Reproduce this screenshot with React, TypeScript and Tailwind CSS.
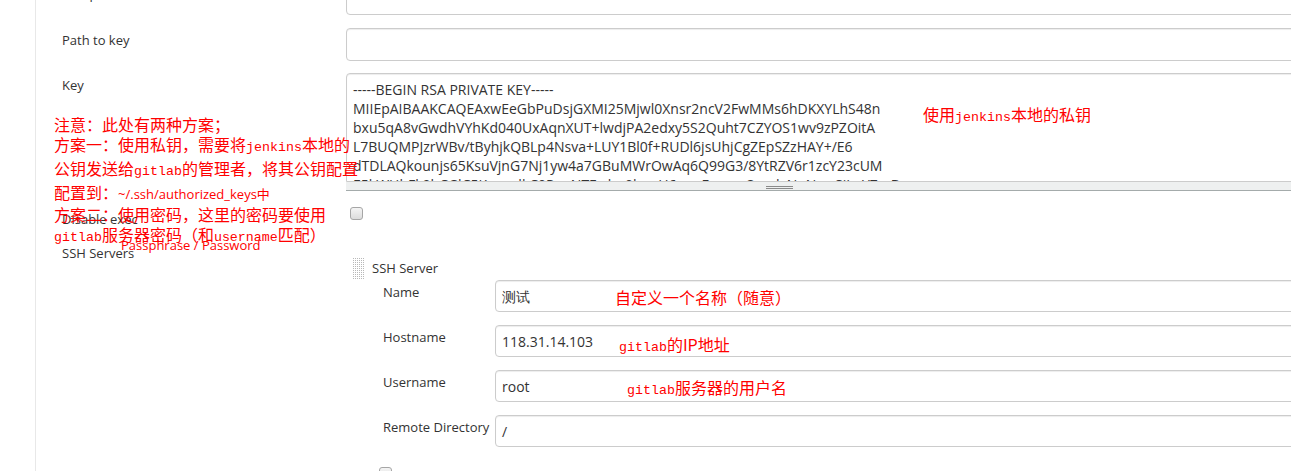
import React from 'react';

const mono = "font-['Liberation_Mono',monospace] text-[13.3px]";

const keyLines = [
  '-----BEGIN RSA PRIVATE KEY-----',
  'MIIEpAIBAAKCAQEAxwEeGbPuDsjGXMI25Mjwl0Xnsr2ncV2FwMMs6hDKXYLhS48n',
  'bxu5qA8vGwdhVYhKd040UxAqnXUT+lwdjPA2edxy5S2Quht7CZYOS1wv9zPZOitA',
  'L7BUQMPJzrWBv/tByhjkQBLp4Nsva+LUY1Bl0f+RUDl6jsUhjCgZEpSZzHAY+/E6',
  'dTDLAQkounjs65KsuVjnG7Nj1yw4a7GBuMWrOwAq6Q99G3/8YtRZV6r1zcY23cUM',
  'E5kWHbFk0hCGlC5KyowdkC0PauNTEwhn0lwwH6auqEuaqwOpsdvNuNawSiLqY7mD',
];

const TextBox = ({ h = 'h-[33px]', children }: { h?: string; children?: React.ReactNode }) => (
  <div className={`${h} flex items-center rounded-[4px] border border-[#cccccc] bg-white px-[6px] text-[14px] text-[#333] shadow-[inset_0_1px_1px_rgba(0,0,0,0.075)]`}>
    {children}
  </div>
);

const Checkbox = () => (
  <div className="h-[13px] w-[13px] rounded-[3px] border border-[#a6a6a6] bg-gradient-to-b from-[#f4f4f4] to-[#dcdcdc]" />
);

const Row = ({ label, children, className = '' }: { label: string; children: React.ReactNode; className?: string }) => (
  <div className={`flex ${className}`}>
    <div className="w-[284px] shrink-0 pt-[3px] text-[13px] leading-[18px]">{label}</div>
    <div className="flex-1">{children}</div>
  </div>
);

const ServerRow = ({ label, value, className = '' }: { label: string; value?: string; className?: string }) => (
  <div className={`flex pl-[37px] ${className}`}>
    <div className="w-[112px] shrink-0 pt-[3px] text-[13px] leading-[18px] whitespace-nowrap">{label}</div>
    <div className="flex-1">
      <TextBox h="h-[32px]">{value}</TextBox>
    </div>
  </div>
);

const DragHandle = () => (
  <svg width="11" height="21" viewBox="0 0 11 21">
    <defs>
      <pattern id="dots" width="2" height="2" patternUnits="userSpaceOnUse">
        <rect width="1" height="1" fill="#b8b8b8" />
      </pattern>
    </defs>
    <rect width="11" height="21" fill="url(#dots)" />
  </svg>
);

export default function App() {
  return (
    <div className="relative h-[471px] w-full overflow-hidden bg-white font-['Open_Sans',sans-serif] text-[#333]">
      <div className="flex">
        <div className="w-[35px] shrink-0" />
        <div className="-mr-[12px] min-h-[471px] flex-1 border-l border-[#e8e8e8] pl-[26px]">
          <Row label="Passphrase" className="-mt-[18px]">
            <TextBox />
          </Row>
          <Row label="Path to key" className="mt-[13px]">
            <TextBox />
          </Row>
          <Row label="Key" className="mt-[12px]">
            <div className="h-[109px] overflow-hidden rounded-t-[4px] border border-[#cccccc] px-[6px] pt-[6px] text-[14px] leading-[19px] whitespace-nowrap shadow-[inset_0_1px_1px_rgba(0,0,0,0.075)]">
              {keyLines.map((l, i) => (
                <div key={i}>{l}</div>
              ))}
            </div>
            <div className="flex h-[9px] justify-center border-b border-[#a4abab] bg-[#eef0f0]">
              <div className="mt-[4px] ml-[-90px] h-[3px] w-[27px] border-y border-[#8a8a8a]" />
            </div>
          </Row>
          <Row label="Disable exec" className="mt-[16px]">
            <div className="pl-[4px]">
              <Checkbox />
            </div>
          </Row>
          <Row label="SSH Servers" className="mt-[13px]">
            <div className="pt-[17px]">
              <div className="flex items-center gap-[8px] pl-[7px]">
                <DragHandle />
                <span className="text-[13px]">SSH Server</span>
              </div>
              <ServerRow label="Name" value="测试" className="mt-[1px]" />
              <ServerRow label="Hostname" value="118.31.14.103" className="mt-[13px]" />
              <ServerRow label="Username" value="root" className="mt-[13px]" />
              <ServerRow label="Remote Directory" value="/" className="mt-[13px]" />
              <div className="mt-[20px] pl-[33px]">
                <Checkbox />
              </div>
            </div>
          </Row>
        </div>
      </div>

      <div className="absolute left-[54px] top-[114px] font-['Noto_Sans_CJK_SC',sans-serif] text-[16px] leading-[20px] text-[#ff0000] whitespace-nowrap">
        <div>注意：此处有两种方案；</div>
        <div>
          方案一：使用私钥，需要将<span className={mono}>jenkins</span>本地的
        </div>
        <div>
          公钥发送给<span className={mono}>gitlab</span>的管理者，将其公钥配置
        </div>
        <div>
          配置到：<span className="font-['Open_Sans','Noto_Sans_CJK_SC',sans-serif] text-[13px]">~/.ssh/authorized_keys中</span>
        </div>
        <div>方案二：使用密码，这里的密码要使用</div>
        <div>
          <span className={mono}>gitlab</span>服务器密码（和<span className={mono}>username</span>匹配）
        </div>
      </div>
      <div className="absolute left-[121px] top-[237px] font-['Open_Sans',sans-serif] text-[13px] leading-[16px] text-[#ff0000]">
        Passphrase / Password
      </div>
      <div className="absolute left-[923px] top-[104px] font-['Noto_Sans_CJK_SC',sans-serif] text-[16px] leading-[20px] text-[#ff0000] whitespace-nowrap">
        使用<span className={mono}>jenkins</span>本地的私钥
      </div>
      <div className="absolute left-[615px] top-[287px] font-['Noto_Sans_CJK_SC',sans-serif] text-[16px] leading-[20px] text-[#ff0000] whitespace-nowrap">
        自定义一个名称（随意）
      </div>
      <div className="absolute left-[619px] top-[334px] font-['Noto_Sans_CJK_SC',sans-serif] text-[16px] leading-[20px] text-[#ff0000] whitespace-nowrap">
        <span className={mono}>gitlab</span>的IP地址
      </div>
      <div className="absolute left-[627px] top-[377px] font-['Noto_Sans_CJK_SC',sans-serif] text-[16px] leading-[20px] text-[#ff0000] whitespace-nowrap">
        <span className={mono}>gitlab</span>服务器的用户名
      </div>
    </div>
  );
}
